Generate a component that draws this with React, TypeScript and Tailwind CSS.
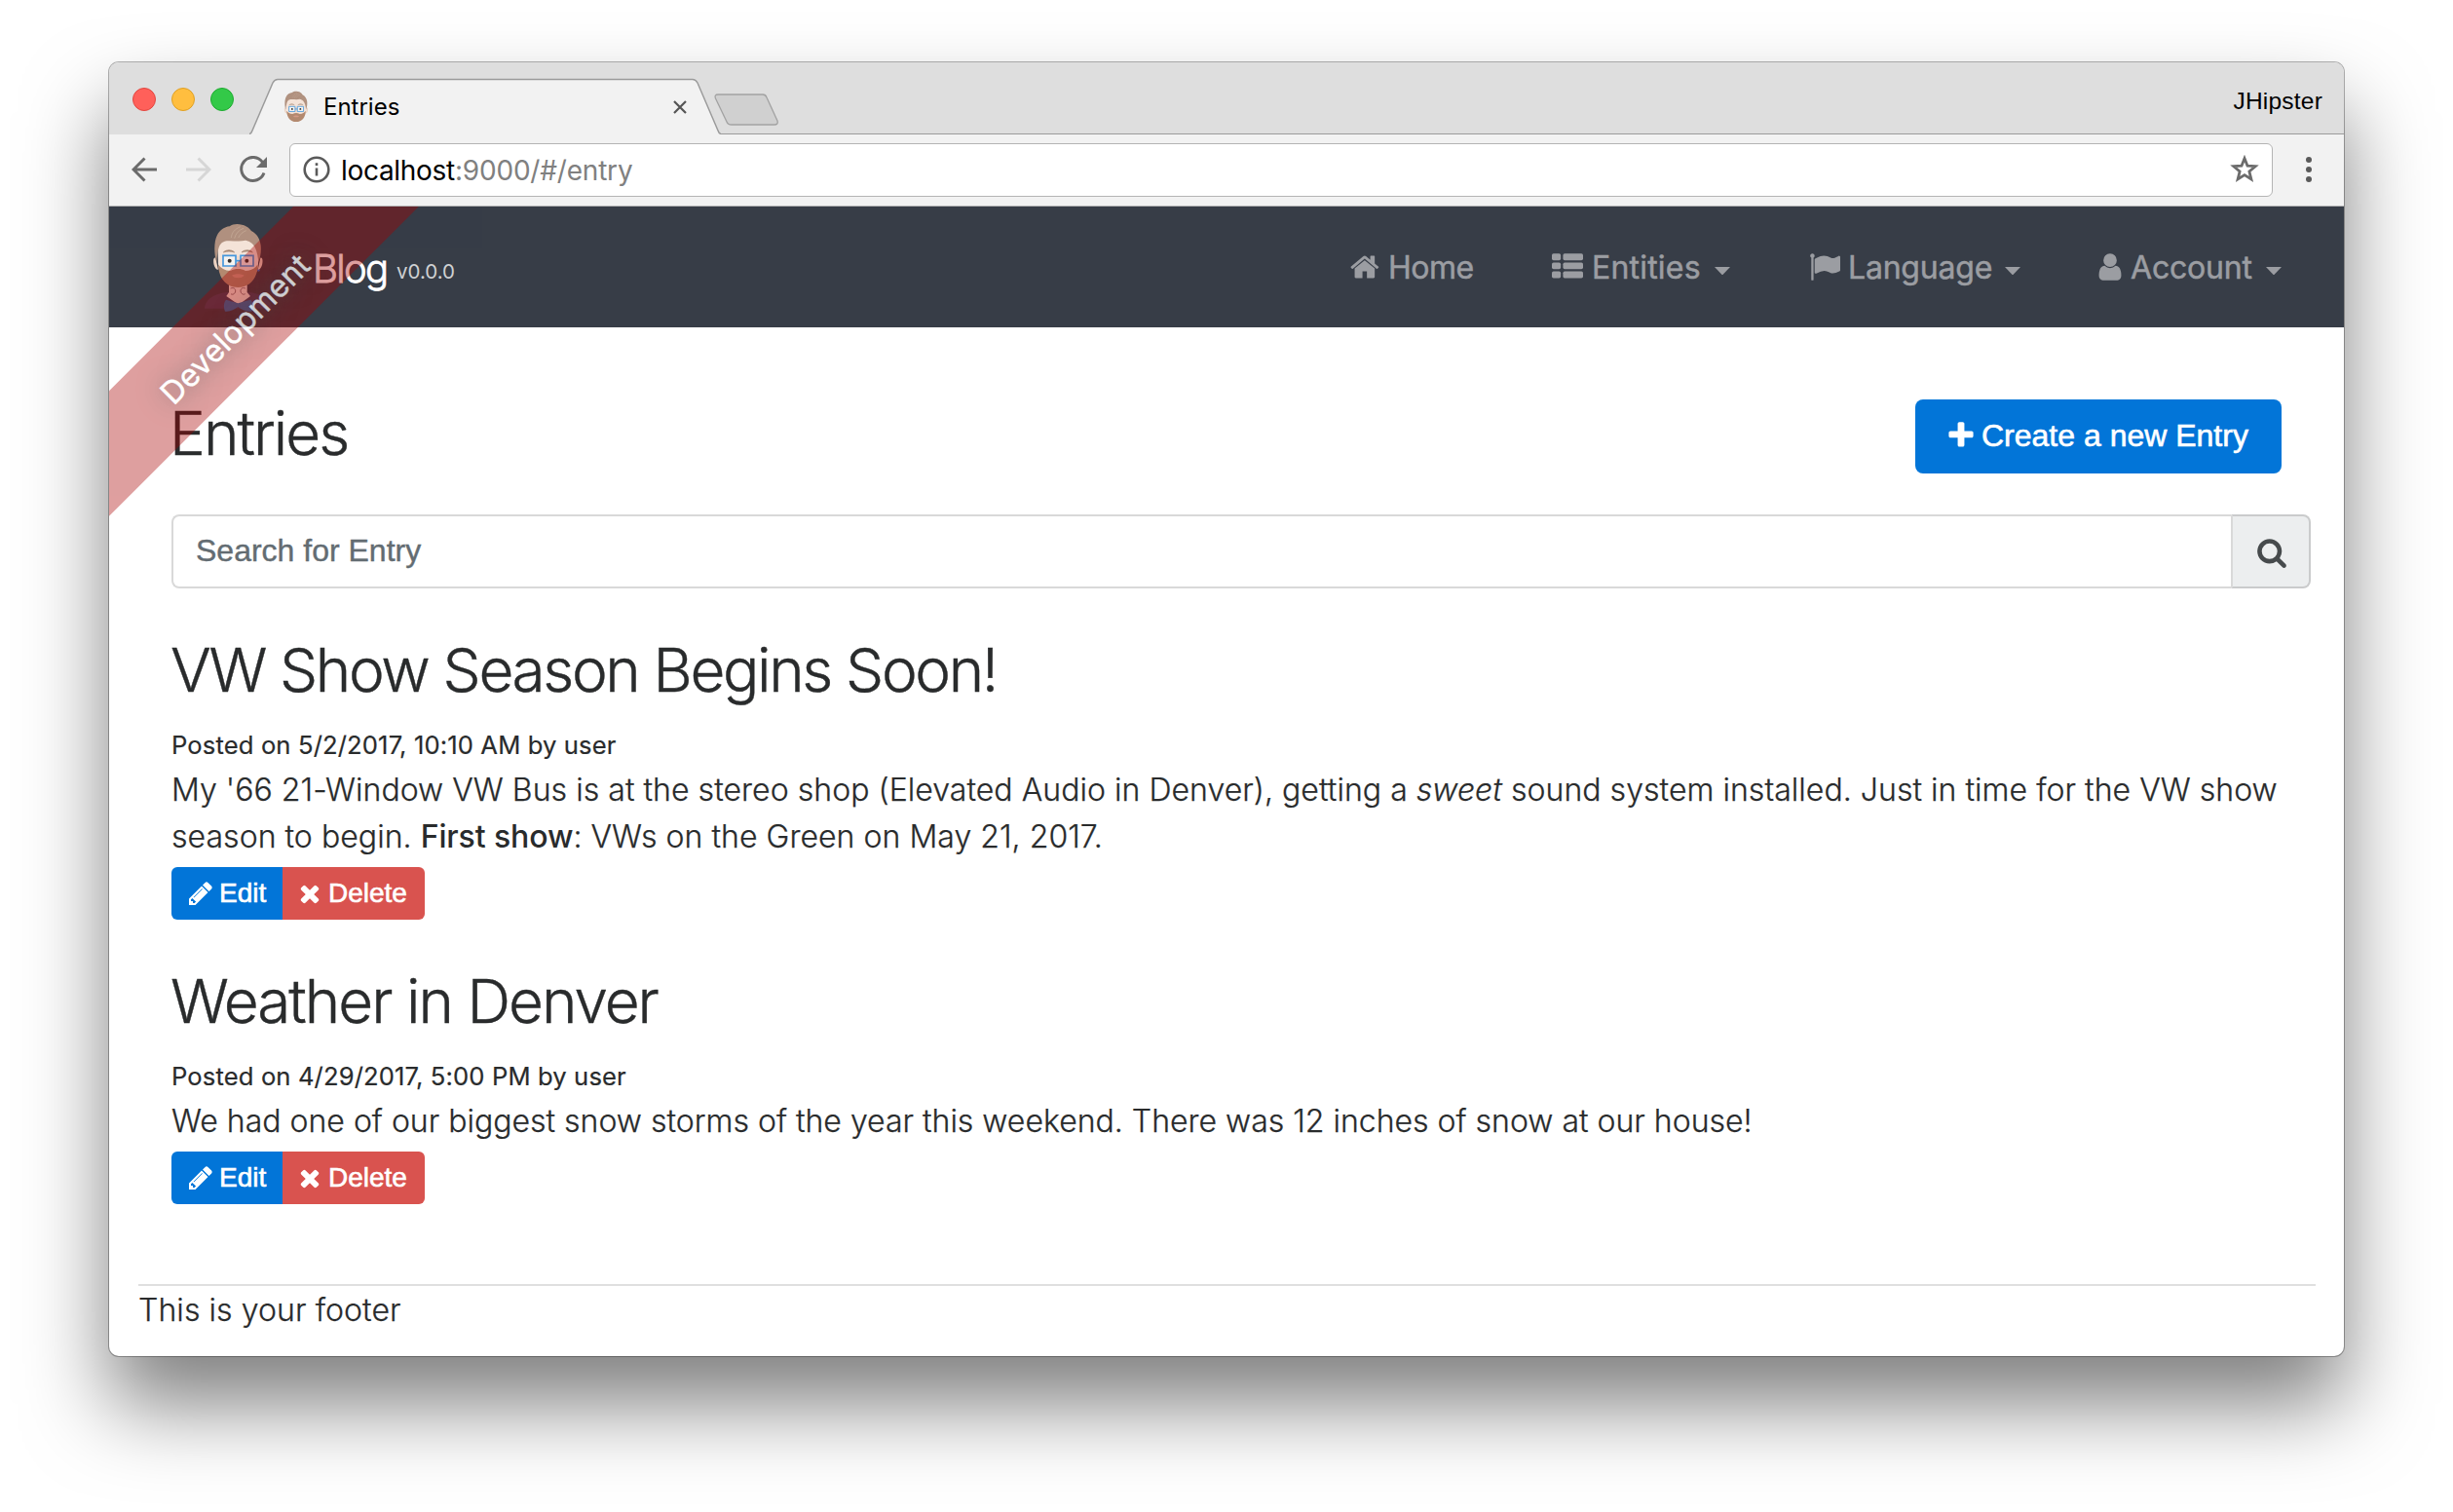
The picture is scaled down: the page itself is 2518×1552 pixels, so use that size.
import type { ReactNode } from "react";

const ICONS = {
  home: "M1408 992v480q0 26-19 45t-45 19h-384v-384h-256v384h-384q-26 0-45-19t-19-45v-480q0-1 .5-3t.5-3l575-474 575 474q1 2 1 6zm223-69l-62 74q-8 9-21 11h-3q-13 0-21-7l-692-577-692 577q-12 8-24 7-13-2-21-11l-62-74q-8-10-7-23.5t11-21.5l719-599q32-26 76-26t76 26l244 204v-195q0-14 9-23t23-9h192q14 0 23 9t9 23v408l219 182q10 8 11 21.5t-7 23.5z",
  flag: "M320 256q0 72-64 110v1266q0 13-9.5 22.5t-22.5 9.5h-64q-13 0-22.5-9.5t-9.5-22.5v-1266q-64-38-64-110 0-53 37.5-90.5t90.5-37.5 90.5 37.5 37.5 90.5zm1472 64v763q0 25-12.5 38.5t-39.5 27.5q-215 116-369 116-61 0-123.5-22t-108.5-48-115.5-48-142.5-22q-192 0-464 146-17 9-33 9-26 0-45-19t-19-45v-742q0-32 31-55 21-14 79-43 236-120 421-120 107 0 200 29t219 88q38 19 88 19 54 0 117.5-21t110-47 88-47 54.5-21q26 0 45 19t19 45z",
  user: "M1536 1399q0 109-62.5 187t-150.5 78h-854q-88 0-150.5-78t-62.5-187q0-85 8.5-160.5t31.5-152 58.5-131 94-89 134.5-34.5q131 128 313 128t313-128q76 0 134.5 34.5t94 89 58.5 131 31.5 152 8.5 160.5zm-256-887q0 159-112.5 271.5t-271.5 112.5-271.5-112.5-112.5-271.5 112.5-271.5 271.5-112.5 271.5 112.5 112.5 271.5z",
  plus: "M1600 736v192q0 40-28 68t-68 28h-416v416q0 40-28 68t-68 28h-192q-40 0-68-28t-28-68v-416h-416q-40 0-68-28t-28-68v-192q0-40 28-68t68-28h416v-416q0-40 28-68t68-28h192q40 0 68 28t28 68v416h416q40 0 68 28t28 68z",
  search: "M1216 832q0-185-131.5-316.5t-316.5-131.5-316.5 131.5-131.5 316.5 131.5 316.5 316.5 131.5 316.5-131.5 131.5-316.5zm512 832q0 52-38 90t-90 38q-54 0-90-38l-343-342q-179 124-399 124-143 0-273.5-55.5t-225-150-150-225-55.5-273.5 55.5-273.5 150-225 225-150 273.5-55.5 273.5 55.5 225 150 150 225 55.5 273.5q0 220-124 399l343 343q37 37 37 90z",
  pencil: "M491 1536l91-91-235-235-91 91v107h128v128h107zm523-928q0-22-22-22-10 0-17 7l-542 542q-7 7-7 17 0 22 22 22 10 0 17-7l542-542q7-7 7-17zm-54-192l416 416-832 832h-416v-416zm683 96q0 53-37 90l-166 166-416-416 166-165q36-38 90-38 53 0 91 38l235 234q37 39 37 91z",
  times: "M1490 1322q0 40-28 68l-136 136q-28 28-68 28t-68-28l-294-294-294 294q-28 28-68 28t-68-28l-136-136q-28-28-28-68t28-68l294-294-294-294q-28-28-28-68t28-68l136-136q28-28 68-28t68 28l294 294 294-294q28-28 68-28t68 28l136 136q28 28 28 68t-28 68l-294 294 294 294q28 28 28 68z",
};

function Icon({ name, className }: { name: keyof typeof ICONS; className: string }) {
  return (
    <svg viewBox="0 0 1792 1792" className={`shrink-0 fill-current ${className}`}>
      <path d={ICONS[name]} />
    </svg>
  );
}

function ListIcon() {
  return (
    <svg viewBox="0 0 1792 1792" className="size-8 shrink-0 fill-current">
      {[128, 640, 1152].map((y) => (
        <g key={y}>
          <rect x="0" y={y} width="512" height="384" rx="96" />
          <rect x="640" y={y} width="1152" height="384" rx="96" />
        </g>
      ))}
    </svg>
  );
}

function Caret() {
  return (
    <svg viewBox="0 0 16 8" className="mt-[7px] h-2 w-4 shrink-0 fill-current">
      <path d="M0 0h16L8 8.4z" />
    </svg>
  );
}

function HipsterHead() {
  return (
    <>
      <path d="M34 128c-7-2-8 10-5 22 3 10 8 15 13 14zM172 128c7-2 8 10 5 22-3 10-8 15-13 14z" fill="#ecd3c3" />
      <path d="M40 88c0-34 26-46 63-46s64 12 64 46l-2 62c-3 34-30 58-62 58s-58-24-61-58z" fill="#f4e3d8" />
      <path d="M37 142c-9-28-8-66 2-84 8-16 22-25 38-27 10-8 25-9 38-5 12 2 20 8 29 19 18 10 26 24 29 44 2 20-1 36-7 53-2-22-6-42-16-54-8-9-16-12-24-14-18 5-42 0-58 2-18 3-22 14-25 24-4 14-5 28-6 42z" fill="#b0917f" />
      <path d="M82 66c2-16 10-26 28-34M92 68c4-16 14-26 28-31M104 66c6-12 14-18 24-22" fill="none" stroke="#c9ad9b" strokeWidth="2" />
      <path d="M58 111c8-9 26-9 34 0-12-4-22-4-34 0zM114 111c8-9 26-9 34 0-12-4-22-4-34 0z" fill="#a58673" stroke="#a58673" strokeWidth="2" />
      <path d="M42 148c8 12 20 20 38 20 8-4 14-6 23-6s15 2 23 6c18 0 30-8 38-20 0 42-24 71-61 71s-60-29-61-71z" fill="#b3896f" />
      <path d="M84 182c10-6 28-6 38 0-8 10-30 10-38 0z" fill="#d39a86" />
      <path d="M97 122h12l3 34q-9 8-18 0z" fill="#f0dacd" />
      <g fill="#f6f3f0" stroke="#4497dc" strokeWidth="5">
        <path d="M57 121h39v32H57zM111 121h39v32h-39z" />
        <path d="M96 137h15" />
      </g>
      <circle cx="77" cy="137" r="6" fill="#33302f" />
      <circle cx="130" cy="137" r="6" fill="#33302f" />
    </>
  );
}

function HipsterLogo() {
  return (
    <svg viewBox="0 0 225 315" className="h-[105px] w-[75px] shrink-0">
      <path d="M0 284c0-24 24-44 66-50h74c42 6 66 26 66 50z" fill="#45425a" />
      <path d="M75 204h56v30l10 12-36 26-38-26 8-12z" fill="#f4dfd3" />
      <path d="M80 222c10-4 16 2 15 9-1 8-9 12-14 8M126 222c-10-4-16 2-15 9 1 8 9 12 14 8" fill="none" stroke="#8d6f72" strokeWidth="3" />
      <path d="M103 268 66 257c-8 10-8 24-3 36 16 2 28-6 40-14 12 8 26 16 42 14 6-12 6-26-3-36z" fill="#2e6da3" />
      <circle cx="166" cy="166" r="4" fill="#3a6fc0" />
      <HipsterHead />
    </svg>
  );
}

function BrowserTabs() {
  return (
    <div className="flex h-[74px] bg-[#dedede]">
      <div className="flex w-[144px] items-center gap-4 pl-6 pt-0.5">
        <span className="size-6 rounded-full border border-[#e2463f] bg-[#ff605a]" />
        <span className="size-6 rounded-full border border-[#dfa023] bg-[#ffbe3f]" />
        <span className="size-6 rounded-full border border-[#1eab30] bg-[#33c948]" />
      </div>
      <div className="relative h-full w-[484px]">
        <svg viewBox="0 0 484 74" className="absolute inset-0 h-full w-full">
          <path d="M0 74V73.5Q2 73 3 70L24 21Q26 17.5 29 17.500H455Q458 17.500 460 21L481 70Q482 73 484 73.500V74z" fill="#f2f2f2" />
          <path d="M0 73.500Q2 73 3 70L24 21Q26 17.500 29 17.500H455Q458 17.500 460 21L481 70Q482 73 484 73.500" fill="none" stroke="#9b9b9b" strokeWidth="1.500" />
        </svg>
        <div className="relative flex h-full items-center pl-[35px] pt-[17px]">
          <svg viewBox="22 20 162 204" className="h-[33px] w-[26px]">
            <HipsterHead />
          </svg>
          <span className="ml-[15px] grow text-2xl text-black">Entries</span>
          <svg viewBox="0 0 14 14" className="mr-[35px] size-[14px]">
            <path d="M1 1l12 12M13 1L1 13" stroke="#555" strokeWidth="2.200" />
          </svg>
        </div>
      </div>
      <div className="flex grow items-start justify-between border-b border-[#9b9b9b] pr-[22px]">
        <svg viewBox="0 0 66 34" className="-ml-[7px] mt-8 h-[34px] w-[66px]">
          <path d="M4 1H50Q53 1 54 4L65 28Q66 32 62 32H18Q14 32 13 29L1.500 5Q0 1 4 1z" fill="#d0d0d0" stroke="#a2a2a2" strokeWidth="1.300" />
        </svg>
        <span className="mt-[26px] font-['Liberation_Sans',sans-serif] text-[24.500px] leading-[28px] tracking-[0.200px] text-black">JHipster</span>
      </div>
    </div>
  );
}

function BrowserToolbar() {
  return (
    <div className="flex h-[74px] items-center border-b border-[#b5b5b5] bg-[#f2f2f2] pl-[23px]">
      <svg viewBox="0 0 26 26" className="-mt-0.5 size-[26px]" fill="none" stroke="#6b6b6b" strokeWidth="3">
        <path d="M26 13H2M13.500 1.500L2 13l11.500 11.500" />
      </svg>
      <svg viewBox="0 0 26 26" className="-mt-0.5 ml-[30px] size-[26px]" fill="none" stroke="#d6d6d6" strokeWidth="3">
        <path d="M0 13h24M12.500 1.500L24 13 12.500 24.500" />
      </svg>
      <svg viewBox="0 0 28 28" className="-mt-0.5 ml-[29px] size-7" fill="none" stroke="#6b6b6b" strokeWidth="3">
        <path d="M23.500 6.500A12 12 0 1 0 25 17.500" />
        <path d="M28 1v11H17z" fill="#6b6b6b" stroke="none" />
      </svg>
      <div className="ml-[23px] flex h-[55px] w-[2036px] items-center rounded-md border border-[#b4b4b4] bg-white px-[13px]">
        <svg viewBox="0 0 28 28" className="-mt-0.5 size-7" fill="none" stroke="#5a5a5a" strokeWidth="2.600">
          <circle cx="14" cy="14" r="12.300" />
          <path d="M14 12.500v8M14 7.300v2.800" />
        </svg>
        <span className="ml-[11px] grow text-[28px] tracking-[-0.200px] text-[#808080]">
          <span className="tracking-[-0.300px] text-black">localhost</span>:9000/#/entry
        </span>
        <svg viewBox="0 0 30 29" className="-mt-0.5 h-[29px] w-[30px]">
          <path d="M15 3.500l3 7.700 8.200.5-6.300 5.300 2 8L15 20.600 8.100 25l2-8-6.300-5.300 8.200-.5z" fill="none" stroke="#6b6b6b" strokeWidth="2.800" />
        </svg>
      </div>
      <svg viewBox="0 0 6 26" className="-mt-px ml-[34px] h-[26px] w-1.5 fill-[#5a5a5a]">
        <circle cx="3" cy="3" r="3" />
        <circle cx="3" cy="13" r="3" />
        <circle cx="3" cy="23" r="3" />
      </svg>
    </div>
  );
}

function NavBar() {
  return (
    <nav className="flex h-[124px] items-center bg-[#373d47] pl-[98px]">
      <HipsterLogo />
      <span className="ml-9 mt-1 w-[86px] text-[40px] font-light tracking-[-1.700px] text-white [-webkit-text-stroke:0.800px_#fff]">Blog</span>
      <span className="mt-[10px] text-[20.500px] text-[#cfd1d3]">v0.0.0</span>
      <div className="ml-auto flex text-[32px] leading-[48px] text-[#9b9da2] [-webkit-text-stroke:0.500px_#9b9da2]">
        <a className="flex w-[208px] items-center">
          <Icon name="home" className="ml-px size-8" />
          <span className="ml-[7px] mt-0.5 tracking-[-0.500px]">Home</span>
        </a>
        <a className="flex w-[264px] items-center">
          <ListIcon />
          <span className="ml-[9px] mt-0.5 w-[126px] tracking-[0.200px]">Entities</span>
          <Caret />
        </a>
        <a className="flex w-[293px] items-center">
          <Icon name="flag" className="size-8" />
          <span className="ml-2 mt-0.5 w-[161px] tracking-[-0.200px]">Language</span>
          <Caret />
        </a>
        <a className="flex w-[256px] items-center">
          <Icon name="user" className="size-8" />
          <span className="ml-[5px] mt-0.5 w-[139px] tracking-[-0.200px]">Account</span>
          <Caret />
        </a>
      </div>
    </nav>
  );
}

function Ribbon() {
  return (
    <div className="pointer-events-none absolute left-0 top-0 size-[420px] overflow-hidden">
      <div className="absolute left-[-170px] top-[78px] flex h-[91px] w-[600px] -rotate-45 items-center justify-center bg-[#aa0000]/50 pr-1 pt-0.5 text-[32px] tracking-[0.150px] text-white opacity-75 [-webkit-text-stroke:0.400px_#fff] [text-shadow:0_0_24px_#444]">
        Development
      </div>
    </div>
  );
}

function Entry({ title, titleClass, posted, children }: { title: string; titleClass: string; posted: string; children: ReactNode }) {
  return (
    <article className="mt-12">
      <h2 className={`-ml-px h-[70px] text-[62px] font-light leading-[71px] [-webkit-text-stroke:0.400px_#292b2c] ${titleClass}`}>{title}</h2>
      <p className="mt-[21px] h-[43px] text-[25.600px] leading-[43px] tracking-[0.130px] [-webkit-text-stroke:0.200px_#292b2c]">{posted}</p>
      <div className="mt-px text-[32px] font-light leading-[48px] [-webkit-text-stroke:0.250px_#292b2c]">{children}</div>
      <div className="mt-[7px] flex h-[54px] w-[260px] overflow-hidden rounded-md font-['Liberation_Sans',sans-serif] text-[28px] text-white [-webkit-text-stroke:0.600px_#fff]">
        <button className="flex w-[114px] items-center bg-[#0275d8] pl-4">
          <Icon name="pencil" className="size-7" />
          <span className="ml-[5px]">Edit</span>
        </button>
        <button className="flex w-[146px] items-center bg-[#d9534f] pl-[14px]">
          <Icon name="times" className="size-7" />
          <span className="ml-[5px]">Delete</span>
        </button>
      </div>
    </article>
  );
}

export default function App() {
  return (
    <div className="h-[1552px] w-[2518px] overflow-hidden bg-white pl-28 pt-16 font-['Inter',sans-serif] text-[#292b2c]">
      <div className="h-[1328px] w-[2294px] overflow-hidden rounded-[10px] bg-white shadow-[0_0_0_1px_rgba(0,0,0,0.300),0_50px_85px_rgba(0,0,0,0.500)]">
        <BrowserTabs />
        <BrowserToolbar />
        <div className="relative">
          <NavBar />
          <main className="pl-16 pt-[74px]">
            <div className="flex w-[2166px] items-start justify-between">
              <h2 className="-ml-0.5 h-[70px] text-[62px] font-light leading-[70px] tracking-[-2px] [-webkit-text-stroke:0.400px_#292b2c]">Entries</h2>
              <button className="flex h-[76px] w-[376px] items-center rounded-lg bg-[#0275d8] pl-[31px] font-['Liberation_Sans',sans-serif] text-[32px] text-white [-webkit-text-stroke:0.600px_#fff]">
                <Icon name="plus" className="-mt-0.5 size-8" />
                <span className="-mt-0.5 ml-[5px]">Create a new Entry</span>
              </button>
            </div>
            <div className="mt-[42px] flex h-[76px] w-[2196px] font-['Liberation_Sans',sans-serif] text-[32px]">
              <div className="flex grow items-center rounded-l-lg border-2 border-r-0 border-[#d9d9d9] pl-[23px] text-[#636c72]">
                <span className="-mt-0.5 [-webkit-text-stroke:0.400px_#636c72]">Search for Entry</span>
              </div>
              <div className="flex w-[82px] items-center justify-center rounded-r-lg border-2 border-[#cacbcc] border-l-[#d9d9d9] bg-[#eceeef] pl-px pt-px text-[#464a4c]">
                <Icon name="search" className="size-8" />
              </div>
            </div>
            <Entry title="VW Show Season Begins Soon!" titleClass="tracking-[-2.350px]" posted="Posted on 5/2/2017, 10:10 AM by user">
              <p className="tracking-[0.040px]">
                My '66 21-Window VW Bus is at the stereo shop (Elevated Audio in Denver), getting a <em>sweet</em> sound system installed. Just in time for the VW show
                <br />
                season to begin. <strong className="font-medium tracking-[-0.100px] [-webkit-text-stroke:0px]">First show</strong>: VWs on the Green on May 21, 2017.
              </p>
            </Entry>
            <Entry title="Weather in Denver" titleClass="tracking-[-2px]" posted="Posted on 4/29/2017, 5:00 PM by user">
              <p>We had one of our biggest snow storms of the year this weekend. There was 12 inches of snow at our house!</p>
            </Entry>
          </main>
          <footer className="ml-[30px] mt-[82px] w-[2235px] border-t-2 border-[#dfdfdf] pt-px text-[32px] font-light leading-[48px] tracking-[0.080px] [-webkit-text-stroke:0.250px_#292b2c]">
            This is your footer
          </footer>
          <Ribbon />
        </div>
      </div>
    </div>
  );
}
